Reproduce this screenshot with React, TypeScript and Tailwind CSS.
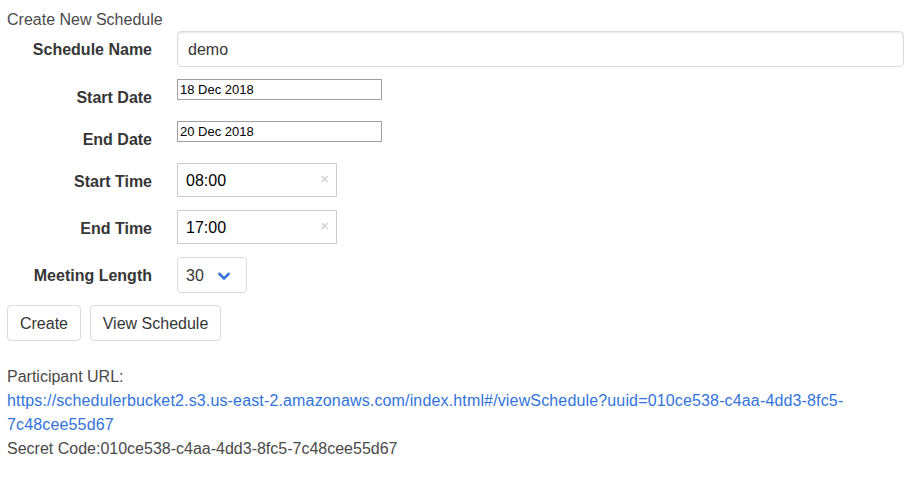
import React from 'react';

const font = { fontFamily: '"Liberation Sans", Arial, sans-serif' };

const Label = ({ children, className = 'pt-[2px]' }: { children: React.ReactNode; className?: string }) => (
  <div className={`w-[145px] shrink-0 text-right font-bold text-[#363636] text-base leading-6 ${className}`}>{children}</div>
);

const TimeBox = ({ value }: { value: string }) => (
  <div className="relative w-[160px] h-[34px] border border-[#cccccc] bg-white flex items-center pl-[8px] pt-[1px] text-base text-black">
    {value}
    <span className="absolute right-[7px] top-[5px] text-[15px] text-[#cccccc] leading-5">×</span>
  </div>
);

const DateBox = ({ value }: { value: string }) => (
  <div className="w-[205px] h-[21px] border border-[#a0a0a0] bg-white px-[2px] text-[13px] leading-[19px] text-black">{value}</div>
);

export default function App() {
  const uuid = '010ce538-c4aa-4dd3-8fc5-7c48cee55d67';
  return (
    <div className="min-h-screen bg-white px-[7px] pt-[8px] text-base" style={font}>
      <div className="text-[#4a4a4a] leading-6">Create New Schedule</div>

      <div className="flex items-center gap-[25px] -mt-[1px]">
        <Label>Schedule Name</Label>
        <div className="flex-1 mr-[3px] h-[36px] rounded border border-[#dbdbdb] shadow-[inset_0_1px_2px_rgba(10,10,10,0.1)] flex items-center pl-[10px] pt-[1px] text-[#363636]">
          demo
        </div>
      </div>

      <div className="flex items-start gap-[25px] mt-[12px] h-[30px]">
        <Label className="pt-[7px]">Start Date</Label>
        <DateBox value="18 Dec 2018" />
      </div>

      <div className="flex items-start gap-[25px] mt-[12px] h-[30px]">
        <Label className="pt-[7px]">End Date</Label>
        <DateBox value="20 Dec 2018" />
      </div>

      <div className="flex items-center gap-[25px] mt-[12px]">
        <Label className="pt-[3px]">Start Time</Label>
        <TimeBox value="08:00" />
      </div>

      <div className="flex items-center gap-[25px] mt-[13px]">
        <Label className="pt-[3px]">End Time</Label>
        <TimeBox value="17:00" />
      </div>

      <div className="flex items-center gap-[25px] mt-[13px]">
        <Label>Meeting Length</Label>
        <div className="w-[70px] h-[36px] rounded border border-[#dbdbdb] flex items-center pl-[8px] pt-[1px] gap-[14px] text-[#363636]">
          30
          <svg width="12" height="9" viewBox="0 0 12 9" className="mt-[1px]">
            <path d="M1.5 2 L6 6.5 L10.5 2" fill="none" stroke="#3273dc" strokeWidth="2.6" strokeLinecap="square" />
          </svg>
        </div>
      </div>

      <div className="flex gap-[9px] mt-[12px]">
        <button className="w-[74px] h-[36px] pt-[1px] rounded border border-[#dbdbdb] bg-white text-[#363636] leading-6 text-center">Create</button>
        <button className="w-[131px] h-[36px] pt-[1px] rounded border border-[#dbdbdb] bg-white text-[#363636] leading-6 text-center">View Schedule</button>
      </div>

      <div className="mt-[24px] leading-6 text-[#4a4a4a]">
        <div>Participant URL:</div>
        <a className="text-[#3273dc] block tracking-[0.15px]" href="#">
          {`https://schedulerbucket2.s3.us-east-2.amazonaws.com/index.html#/viewSchedule?uuid=010ce538-c4aa-4dd3-8fc5-`}
          <br />
          7c48cee55d67
        </a>
        <div>Secret Code:{uuid}</div>
      </div>
    </div>
  );
}
